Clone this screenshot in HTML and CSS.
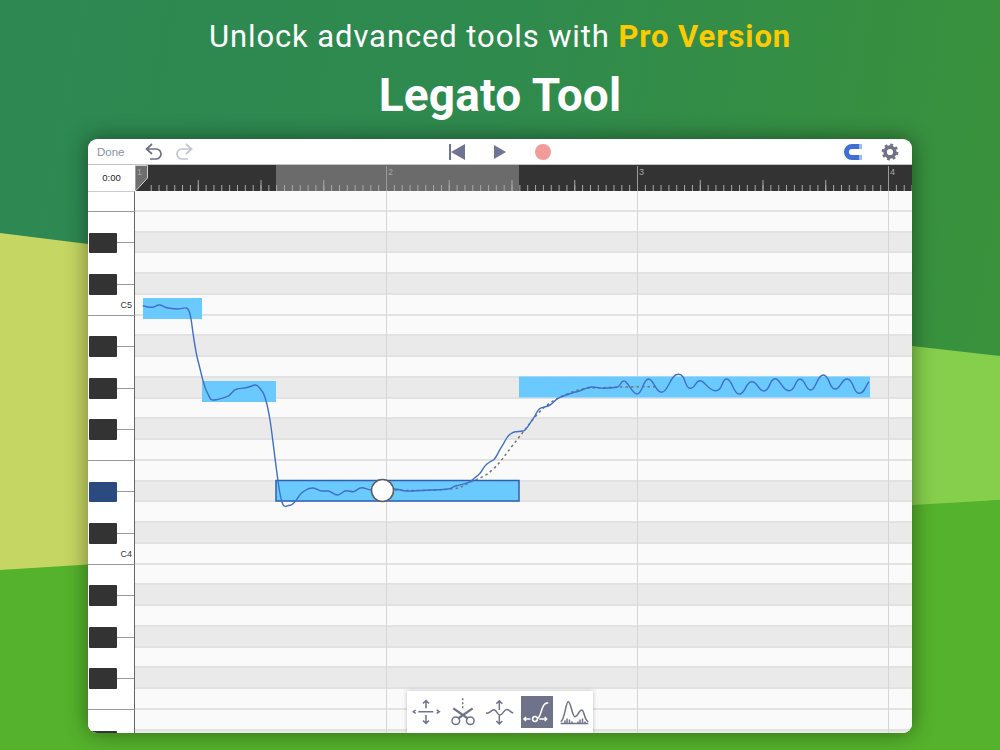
FILE: index.html
```html
<!DOCTYPE html>
<html lang="en">
<head>
    <meta charset="UTF-8">
    <title>Legato Tool</title>
    <link rel="stylesheet" href="styles.css">
</head>
<body>
    <svg class="hills" viewBox="0 0 1000 750">
        <polygon class="hill-yellow" points="0,233 88,244 912,346 912,560 0,570"/>
        <polygon class="hill-light" points="500,400 912,346 1000,356 1000,500 500,540"/>
        <polygon class="hill-green" points="0,570 88,564.5 912,505 1000,500 1000,750 0,750"/>
    </svg>

    <header class="promo">
        <h2 class="promo-line">Unlock advanced tools with <span class="promo-pro">Pro Version</span></h2>
        <h1 class="promo-title">Legato Tool</h1>
    </header>

    <main class="editor">
        <div class="toolbar">
            <div class="toolbar-left">
                <span class="done">Done</span>
                <svg class="icon-line" width="18" height="18" viewBox="0 0 18 18"><path d="M7 1 1.500 6 7 11M2 6h9a5 5 0 0 1 0 10H5"/></svg>
                <svg class="icon-line faded" width="18" height="18" viewBox="0 0 18 18"><path d="M11 1 16.500 6 11 11M16 6H7a5 5 0 0 0 0 10h6"/></svg>
            </div>
            <div class="transport">
                <svg class="icon-fill" width="16" height="16" viewBox="0 0 16 16"><rect x="0" y="0" width="2" height="16"/><polygon points="2,8 16,0 16,16"/></svg>
                <svg class="icon-fill" width="12" height="14" viewBox="0 0 12 14"><polygon points="0,0 12,7 0,14"/></svg>
                <span class="record"></span>
            </div>
            <div class="toolbar-right">
                <svg width="18" height="18" viewBox="0 0 18 18" fill="none"><path class="magnet" d="M15 3.500H8a5.500 5.500 0 0 0 0 11h7"/><path class="magnet-tip" d="M15 3.500h3M15 14.500h3"/></svg>
                <svg width="18" height="18" viewBox="0 0 18 18" fill="none"><circle class="gear" cx="9" cy="9" r="4.900" stroke-width="3.600"/><circle class="gear" cx="9" cy="9" r="7.300" stroke-width="2.200" stroke-dasharray="2.860 2.870"/></svg>
            </div>
        </div>

        <div class="ruler">
            <div class="time">0:00</div>
            <svg class="ruler-strip" viewBox="135 165 777 26" width="777" height="26">
                <defs>
                    <pattern id="shortTicks" patternUnits="userSpaceOnUse" x="135" y="185" width="7.844" height="6"><rect x="0" width="1" height="6" fill="#a8a8a8"/></pattern>
                    <pattern id="longTicks" patternUnits="userSpaceOnUse" x="135" y="180" width="62.750" height="11"><rect x="0" width="1" height="11" fill="#a8a8a8"/></pattern>
                </defs>
                <rect class="ruler-selection" x="276" y="165" width="243" height="26"/>
                <rect x="147" y="185" width="765" height="6" fill="url(#shortTicks)"/>
                <rect x="147" y="180" width="765" height="11" fill="url(#longTicks)"/>
                <polygon class="playhead" points="135,165.500 147.500,165.500 147.500,178 136,190.500 135,190.500"/>
                <text class="bar-num" x="137" y="175">1</text>
                <path class="bar-mark" d="M386.500 166v25M637.500 166v25M888.500 166v25"/>
                <text class="bar-num" x="388" y="175">2</text>
                <text class="bar-num" x="639" y="175">3</text>
                <text class="bar-num" x="890" y="175">4</text>
            </svg>
        </div>

        <div class="roll">
            <div class="row"><div class="key edge top"></div><div class="lane"></div></div>
            <div class="row"><div class="key"></div><div class="lane"></div></div>
            <div class="row"><div class="key"><i class="black"></i><i class="key-line"></i></div><div class="lane shade"></div></div>
            <div class="row"><div class="key"></div><div class="lane"></div></div>
            <div class="row"><div class="key"><i class="black"></i><i class="key-line"></i></div><div class="lane shade"></div></div>
            <div class="row"><div class="key edge note-name">C5</div><div class="lane"></div></div>
            <div class="row"><div class="key"></div><div class="lane"></div></div>
            <div class="row"><div class="key"><i class="black"></i><i class="key-line"></i></div><div class="lane shade"></div></div>
            <div class="row"><div class="key"></div><div class="lane"></div></div>
            <div class="row"><div class="key"><i class="black"></i><i class="key-line"></i></div><div class="lane shade"></div></div>
            <div class="row"><div class="key"></div><div class="lane"></div></div>
            <div class="row"><div class="key"><i class="black"></i><i class="key-line"></i></div><div class="lane shade"></div></div>
            <div class="row"><div class="key edge"></div><div class="lane"></div></div>
            <div class="row"><div class="key"></div><div class="lane"></div></div>
            <div class="row"><div class="key"><i class="black active"></i><i class="key-line"></i></div><div class="lane shade"></div></div>
            <div class="row"><div class="key"></div><div class="lane"></div></div>
            <div class="row"><div class="key"><i class="black"></i><i class="key-line"></i></div><div class="lane shade"></div></div>
            <div class="row"><div class="key edge note-name">C4</div><div class="lane"></div></div>
            <div class="row"><div class="key"></div><div class="lane"></div></div>
            <div class="row"><div class="key"><i class="black"></i><i class="key-line"></i></div><div class="lane shade"></div></div>
            <div class="row"><div class="key"></div><div class="lane"></div></div>
            <div class="row"><div class="key"><i class="black"></i><i class="key-line"></i></div><div class="lane shade"></div></div>
            <div class="row"><div class="key"></div><div class="lane"></div></div>
            <div class="row"><div class="key"><i class="black"></i><i class="key-line"></i></div><div class="lane shade"></div></div>
            <div class="row"><div class="key edge"></div><div class="lane"></div></div>
            <div class="row"><div class="key"></div><div class="lane"></div></div>
            <div class="row"><div class="key"><i class="black"></i><i class="key-line"></i></div><div class="lane shade"></div></div>

            <!-- notes and pitch curve, in page coordinates -->
            <svg class="roll-canvas" viewBox="88 191 824 542" width="824" height="542">
                <path class="bar-line" d="M386.500 191v542M637.500 191v542M888.500 191v542"/>
                <rect class="note" x="143" y="298" width="59" height="21"/>
                <rect class="note" x="202" y="381" width="74" height="21"/>
                <rect class="note" x="519" y="376.500" width="351" height="21"/>
                <rect class="note selected" x="276" y="480.500" width="243" height="20.500"/>
                <path class="guide" d="M395 490 C410 491 430 490.500 447 489.300 S462 486 470 482.300 S485 477 493.300 469 S505 455 513 445 S528 425 536.700 415 S552 401 560 397.300 S574 390.500 583 389 S595 388 603 387.700 S625 386.700 655 386.700"/>
                <path class="pitch" d="M142.700 305.700 C146 307 150 307.500 153.300 307 S156 305 159.300 305 S164 307.500 168.300 308 S173 309 177 309 S184 307.500 186.700 308 C189 309 190.500 315 191.500 322 S195 350 198.300 362 S203 384 207 392 S210 400 214 400 S222 398.500 227 396.700 S232 390 237 389 S246 388.500 251.700 386 S258 386 262 391 S268 408 270 420 S274 452 278.300 483 S285 505.300 290 505.300 S298 495 303.300 491.700 S308 488 312.700 488 S318 491 321.700 491 S325 491 328 491 S334 495 337.300 495 S343 490.700 346.700 490.700 S350 491.700 353 491.700 S358 487.700 361.700 487.700 S367 490 372 490"/>
                <path class="pitch" d="M393 489 C398 488.500 402 491 406.700 491 S418 490.500 426.700 490.300 S440 490 446.700 489.300 S452 486.500 456.700 485.700 S464 484.500 468.300 482.700 S474 478 478.300 475 S482 468 486.700 464.300 S490 462 493.300 460 S498 452 501.700 446.700 S506 437 510 434.300 S513 432 516.700 431.700 S520 431.500 523.300 431 S529 424 533.300 418.300 S537 409 541.700 407.700 S546 407 550 405 S555 399 560 397.300 S570 393 576.700 391.700 S586 387 591.700 387 S598 388.300 603.300 388.300 S612 388 616.700 387.300 S620 381 624 381 S632 394 637.300 394 S643 379 648.500 379 S655 392.300 661.700 392.300 S670 374.300 678.300 374.300 S684 388.300 690 388.300 S695 380.700 700 380.700 S708 390.700 715.700 390.700 S721 379 726.700 379 S733 394 739.300 394 S745.500 381.700 751.700 381.700 S758 391 764 391 S769.500 378.700 775 378.700 S782 390.700 789 390.700 S794.500 379.300 800 379.300 S805.300 390 810.700 390 S817 375 823.300 375 S829 389 835 389 S841 379 847.300 379 S853 393.300 859 393.300 S865 386 869 381.700"/>
                <circle class="handle" cx="382.500" cy="490.500" r="11"/>
            </svg>
        </div>

        <div class="tools">
            <svg class="tool" width="32" height="32" viewBox="0 0 32 32"><path d="M8.300 15.700h15M16 12.300V4.500M13 7.500l3-3 3 3M16 19v8.500M13 24.500l3 3 3-3M5.700 14l-2.400 1.700 2.400 1.700M26.700 14l2.600 1.700-2.600 1.700"/></svg>
            <svg class="tool" width="32" height="32" viewBox="0 0 32 32"><path class="dash" d="M15.700 2.300v10"/><path class="blade" d="M6.300 12.300 21 22.500M25.700 12.300 11 22.500"/><circle cx="8.800" cy="24.700" r="3.800"/><circle cx="23.300" cy="24.700" r="3.800"/></svg>
            <svg class="tool" width="32" height="32" viewBox="0 0 32 32"><path d="M2 16.700C5 19 7 13.500 10 13.800S13 19 16 19 20 13 23 13.500 27 17 29.300 16.700M15.300 14V4.700M12.300 7.700l3-3 3 3M15.300 19.500V28M12.300 25l3 3 3-3"/></svg>
            <svg class="tool tool-active" width="32" height="32" viewBox="0 0 32 32"><path d="M16.300 22.500C21 21 19.500 6.700 27.300 6.700M3 23h6.500M5 21l-2 2 2 2M18.300 23h7.400M23.700 21l2 2-2 2"/><circle cx="14" cy="23" r="2.400"/></svg>
            <svg class="tool" width="32" height="32" viewBox="0 0 32 32"><path d="M2.700 25.700C7 24 7.500 5.700 10.300 5.700S14 20.700 17 20.700 21 14 23.700 14 26 24 30.300 25.700M2.700 27.500h27.600M7 27.500v-3M9 27.500v-5M11.500 27.500v-4M14 27.500v-2M20 27.500v-2M22 27.500v-4M24.500 27.500v-5M27 27.500v-2"/></svg>
        </div>
    </main>
</body>
</html>
```

FILE: styles.css
```css
body {
    position: relative;
    width: 1000px;
    height: 750px;
    margin: 0;
    overflow: hidden;
    font-family: "Liberation Sans", Arial, sans-serif;
    background: linear-gradient(100deg, #2d8852 0%, #2f8a4e 45%, #3b9339 100%);
}
.hills {
    position: absolute;
    left: 0;
    top: 0;
    width: 1000px;
    height: 750px;
}
.hill-yellow { fill: #c6d662; }
.hill-light { fill: #86cf4c; }
.hill-green { fill: #55b22c; }

.promo {
    position: relative;
    height: 139px;
    text-align: center;
    color: white;
    font-family: Roboto, sans-serif;
}
.promo-line {
    margin: 0;
    padding-top: 18px;
    font-size: 31px;
    line-height: 37px;
    font-weight: 400;
    letter-spacing: 0.9px;
}
.promo-pro {
    color: #fcca03;
    font-weight: 700;
}
.promo-title {
    margin: 9px 0 0;
    font-size: 46px;
    line-height: 62px;
    font-weight: 700;
    letter-spacing: 0.2px;
}

.editor {
    position: relative;
    display: flex;
    flex-direction: column;
    width: 824px;
    height: 594px;
    margin: 0 88px;
    overflow: hidden;
    background: white;
    border-radius: 9px;
    box-shadow: 0 0 22px rgba(0,0,0,0.45);
}

.toolbar {
    display: grid;
    grid-template-columns: 1fr auto 1fr;
    align-items: center;
    flex: none;
    height: 26px;
    box-sizing: border-box;
    border-bottom: 1px solid #c4c4c4;
}
.toolbar-left {
    display: flex;
    align-items: center;
    gap: 12px;
    padding-left: 9px;
}
.done {
    width: 36px;
    font-size: 11.5px;
    color: #8b90a6;
}
.transport {
    display: flex;
    align-items: center;
    gap: 29px;
}
.record {
    width: 16px;
    height: 16px;
    border-radius: 50%;
    background: #f29c9a;
}
.toolbar-right {
    display: flex;
    justify-content: flex-end;
    align-items: center;
    gap: 19px;
    padding-right: 13px;
}
.icon-line {
    fill: none;
    stroke: #6b7086;
    stroke-width: 1.7;
}
.icon-line.faded {
    stroke: #c3c6d2;
}
.icon-fill {
    fill: #6f7590;
}
.magnet {
    stroke: #3f6fd2;
    stroke-width: 5;
}
.magnet-tip {
    stroke: #9dbcf0;
    stroke-width: 5;
}
.gear {
    stroke: #6f7388;
}

.ruler {
    display: flex;
    flex: none;
    height: 26px;
}
.time {
    width: 47px;
    font-size: 9.5px;
    line-height: 26px;
    text-align: center;
    color: #222;
}
.ruler-strip {
    display: block;
    background: #333;
}
.ruler-selection { fill: #6b6b6b; }
.playhead {
    fill: #6e6e6e;
    stroke: #d2d2d2;
    stroke-width: 1;
}
.bar-num {
    font-size: 9px;
    fill: #a6a6a6;
}
.bar-mark {
    stroke: #9a9a9a;
    stroke-width: 1;
}

.roll {
    position: relative;
    flex: 1;
    overflow: hidden;
}
.row {
    display: flex;
    height: 20.75px;
}
.key {
    display: flex;
    align-items: center;
    flex: none;
    width: 47px;
    box-sizing: border-box;
    border-right: 1px solid #666;
    background: white;
}
.key.edge {
    border-bottom: 1px solid #999;
}
.key.top {
    border-top: 1px solid #ccc;
}
.note-name {
    justify-content: flex-end;
    padding-right: 2px;
    font-size: 9px;
    color: #333;
}
.black {
    flex: none;
    width: 28px;
    height: 100%;
    margin-left: 1px;
    background: #333;
    border-radius: 1px;
}
.black.active {
    background: #2a4a80;
}
.key-line {
    flex: 1;
    height: 1px;
    background: #999;
}
.lane {
    flex: 1;
    box-sizing: border-box;
    background: #fafafa;
    border-bottom: 2px solid #e2e2e2;
}
.lane.shade {
    background: #eaeaea;
}

.roll-canvas {
    position: absolute;
    left: 0;
    top: 0;
    fill: none;
}
.bar-line {
    stroke: #d6d6d6;
    stroke-width: 1;
}
.note {
    fill: #6acafd;
}
.note.selected {
    stroke: #2f5eb5;
    stroke-width: 1.5;
}
.pitch {
    fill: none;
    stroke: #3f6fc8;
    stroke-width: 1.4;
}
.guide {
    fill: none;
    stroke: #747474;
    stroke-width: 1.5;
    stroke-dasharray: 2.5 3;
}
.handle {
    fill: white;
    stroke: #5c5c5c;
    stroke-width: 1.5;
}

.tools {
    position: absolute;
    left: 319px;
    bottom: 0;
    display: flex;
    gap: 5px;
    padding: 5px 3px;
    background: white;
    box-shadow: 0 0 4px rgba(0,0,0,0.25);
}
.tool {
    fill: none;
    stroke: #6f7389;
    stroke-width: 1.5;
}
.tool .dash {
    stroke-dasharray: 2 2;
}
.tool .blade {
    stroke-width: 2.2;
}
.tool-active {
    background: #6f7389;
    stroke: white;
}
```
